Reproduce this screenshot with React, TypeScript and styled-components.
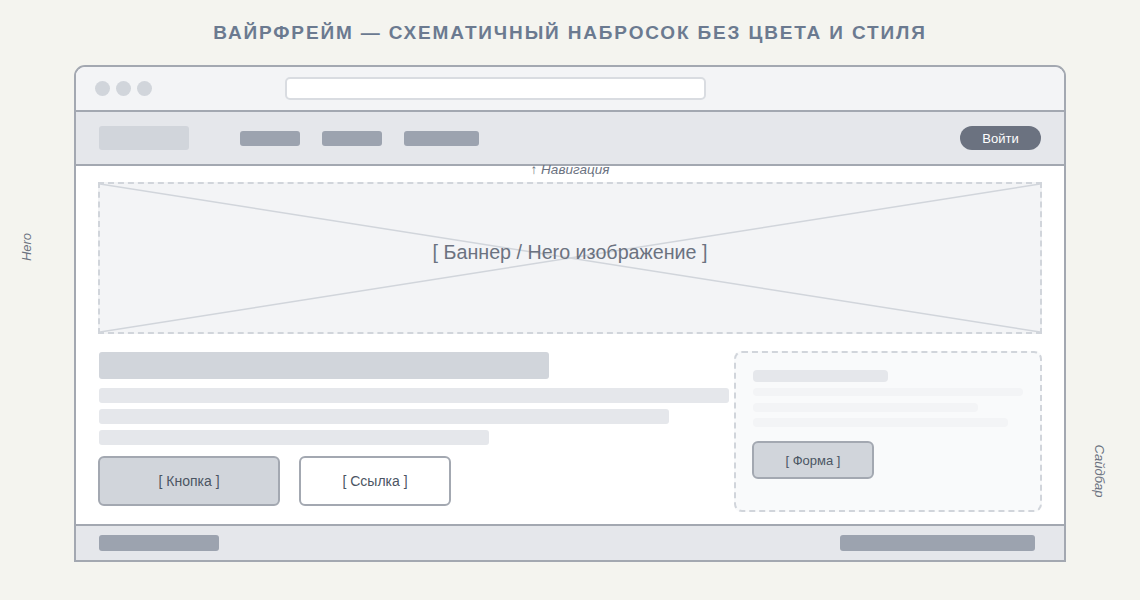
import React from 'react';
import styled, { createGlobalStyle } from 'styled-components';

const GlobalStyle = createGlobalStyle`
  html, body {
    margin: 0;
    padding: 0;
    background: #f4f4ef;
    font-family: 'Liberation Sans', Arial, sans-serif;
  }
`;

const Stage = styled.div`
  position: relative;
  width: 1140px;
  height: 600px;
  display: flex;
  flex-direction: column;
  align-items: center;
  box-sizing: border-box;
  padding-top: 21px;
`;

const Title = styled.h1`
  margin: 0 0 20px;
  font-size: 19px;
  line-height: 24px;
  font-weight: 700;
  letter-spacing: 1.85px;
  color: #6b7a90;
`;

const SideNote = styled.span<{ $side: 'left' | 'right' }>`
  position: absolute;
  font-size: 13px;
  font-style: italic;
  color: #6b7280;
  top: ${p => (p.$side === 'left' ? '247px' : '471px')};
  left: ${p => (p.$side === 'left' ? '26px' : '1099px')};
  transform: translate(-50%, -50%) rotate(${p => (p.$side === 'left' ? '-90deg' : '90deg')});
  white-space: nowrap;
`;

const Window = styled.div`
  width: 992px;
  border: 2px solid #a3a8b1;
  border-radius: 11px 11px 0 0;
  box-sizing: border-box;
  overflow: hidden;
  display: flex;
  flex-direction: column;
  background: #fff;
`;

const Chrome = styled.div`
  height: 43px;
  background: #f3f4f6;
  border-bottom: 2px solid #a3a8b1;
  display: flex;
  align-items: center;
  padding-left: 19px;
  gap: 6px;
`;

const Dot = styled.span`
  width: 15px;
  height: 15px;
  border-radius: 50%;
  background: #d1d5db;
`;

const Address = styled.div`
  margin-left: 127px;
  width: 421px;
  height: 23px;
  box-sizing: border-box;
  background: #fff;
  border: 2px solid #d9dce1;
  border-radius: 5px;
`;

const Nav = styled.div`
  position: relative;
  height: 52px;
  background: #e5e7eb;
  border-bottom: 2px solid #a3a8b1;
  display: flex;
  align-items: center;
  padding: 0 23px;
`;

const Logo = styled.div`
  width: 90px;
  height: 24px;
  border-radius: 3px;
  background: #d1d5db;
  margin-right: 51px;
`;

const NavLinks = styled.div`
  display: flex;
  gap: 22px;
`;

const NavLink = styled.div<{ $w: number }>`
  width: ${p => p.$w}px;
  height: 15px;
  border-radius: 3px;
  background: #9ca3af;
`;

const LoginButton = styled.button`
  margin-left: auto;
  width: 81px;
  height: 24px;
  border: none;
  border-radius: 12px;
  background: #6b7280;
  color: #fff;
  font-family: inherit;
  font-size: 13px;
  padding: 0;
`;

const NavNote = styled.span`
  position: absolute;
  left: 50%;
  top: 100%;
  transform: translate(-50%, -2px);
  font-size: 13.5px;
  font-style: italic;
  color: #6b7280;
  white-space: nowrap;
`;

const Body = styled.div`
  padding: 16px 22px 12px;
  display: flex;
  flex-direction: column;
  gap: 17px;
`;

const Banner = styled.div`
  position: relative;
  height: 152px;
  border: 2px dashed #d1d5db;
  background: #f3f4f6;
  display: flex;
  align-items: center;
  justify-content: center;
  box-sizing: border-box;
`;

const Cross = styled.svg`
  position: absolute;
  inset: 0;
  width: 100%;
  height: 100%;
`;

const BannerLabel = styled.span`
  position: relative;
  font-size: 19.7px;
  color: #6b7280;
  margin-top: -12px;
`;

const Columns = styled.div`
  display: grid;
  grid-template-columns: 1fr 308px;
  gap: 4px;
  align-items: start;
`;

const MainCol = styled.div`
  display: flex;
  flex-direction: column;
  padding-left: 1px;
  padding-top: 1px;
`;

const Heading = styled.div`
  width: 450px;
  height: 27px;
  border-radius: 3px;
  background: #d1d5db;
  margin-bottom: 9px;
`;

const TextLine = styled.div<{ $w: number }>`
  width: ${p => p.$w}px;
  height: 15px;
  border-radius: 3px;
  background: #e5e7eb;
  margin-bottom: 6px;
`;

const Actions = styled.div`
  display: flex;
  gap: 19px;
  margin-top: 5px;
  margin-left: -1px;
`;

const Button = styled.button<{ $primary?: boolean; $w: number }>`
  width: ${p => p.$w}px;
  height: 50px;
  box-sizing: border-box;
  border: 2px solid #a3a8b1;
  border-radius: 6px;
  background: ${p => (p.$primary ? '#d1d5db' : '#fff')};
  color: #4b5563;
  font-family: inherit;
  font-size: 14px;
  padding: 0;
`;

const Sidebar = styled.div`
  height: 161px;
  box-sizing: border-box;
  border: 2px dashed #d1d5db;
  border-radius: 8px;
  background: #f9fafb;
  padding: 17px 17px 0;
  display: flex;
  flex-direction: column;
`;

const SideBar = styled.div<{ $w: number; $h: number; $tone: string; $gap: number }>`
  width: ${p => p.$w}px;
  height: ${p => p.$h}px;
  border-radius: 4px;
  background: ${p => p.$tone};
  margin-bottom: ${p => p.$gap}px;
`;

const FormButton = styled.button`
  width: 122px;
  height: 38px;
  margin-left: -1px;
  box-sizing: border-box;
  border: 2px solid #a3a8b1;
  border-radius: 6px;
  background: #d1d5db;
  color: #4b5563;
  font-family: inherit;
  font-size: 13px;
  padding: 0;
`;

const Footer = styled.div`
  height: 34px;
  background: #e5e7eb;
  border-top: 2px solid #a3a8b1;
  display: flex;
  align-items: center;
  justify-content: space-between;
  padding: 0 29px 0 23px;
`;

const FooterBar = styled.div<{ $w: number }>`
  width: ${p => p.$w}px;
  height: 16px;
  border-radius: 3px;
  background: #9ca3af;
`;

export default function App() {
  return (
    <>
      <GlobalStyle />
      <Stage>
        <Title>ВАЙРФРЕЙМ — СХЕМАТИЧНЫЙ НАБРОСОК БЕЗ ЦВЕТА И СТИЛЯ</Title>
        <SideNote $side="left">Hero</SideNote>
        <SideNote $side="right">Сайдбар</SideNote>

        <Window>
          <Chrome>
            <Dot />
            <Dot />
            <Dot />
            <Address />
          </Chrome>

          <Nav>
            <Logo />
            <NavLinks>
              <NavLink $w={60} />
              <NavLink $w={60} />
              <NavLink $w={75} />
            </NavLinks>
            <LoginButton>Войти</LoginButton>
            <NavNote>↑ Навигация</NavNote>
          </Nav>

          <Body>
            <Banner>
              <Cross viewBox="0 0 100 100" preserveAspectRatio="none">
                <line x1="0" y1="0" x2="100" y2="100" stroke="#d1d5db" strokeWidth="1.5" vectorEffect="non-scaling-stroke" />
                <line x1="100" y1="0" x2="0" y2="100" stroke="#d1d5db" strokeWidth="1.5" vectorEffect="non-scaling-stroke" />
              </Cross>
              <BannerLabel>[ Баннер / Hero изображение ]</BannerLabel>
            </Banner>

            <Columns>
              <MainCol>
                <Heading />
                <TextLine $w={630} />
                <TextLine $w={570} />
                <TextLine $w={390} />
                <Actions>
                  <Button $primary $w={182}>[ Кнопка ]</Button>
                  <Button $w={152}>[ Ссылка ]</Button>
                </Actions>
              </MainCol>

              <Sidebar>
                <SideBar $w={135} $h={12} $tone="#e5e7eb" $gap={6} />
                <SideBar $w={270} $h={8} $tone="#f3f4f6" $gap={7} />
                <SideBar $w={225} $h={9} $tone="#f3f4f6" $gap={6} />
                <SideBar $w={255} $h={9} $tone="#f3f4f6" $gap={14} />
                <FormButton>[ Форма ]</FormButton>
              </Sidebar>
            </Columns>
          </Body>

          <Footer>
            <FooterBar $w={120} />
            <FooterBar $w={195} />
          </Footer>
        </Window>
      </Stage>
    </>
  );
}
